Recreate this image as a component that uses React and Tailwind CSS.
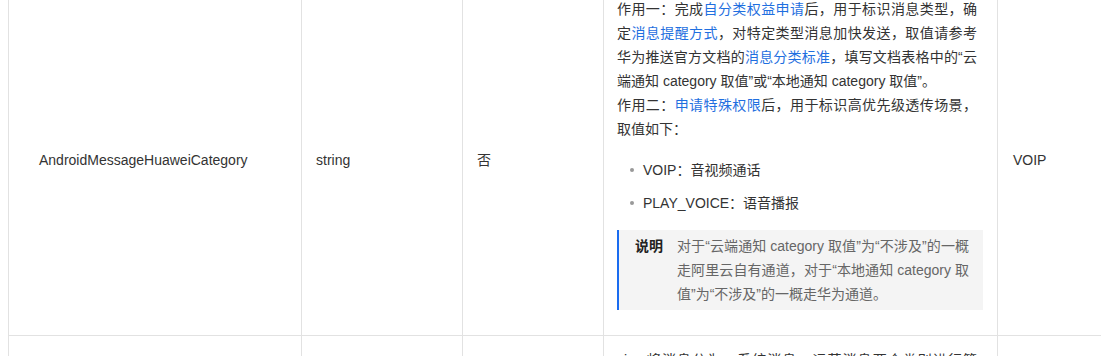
export default function App() {
  const link = "text-[#1f6fe0]";
  const cell = "border border-[#e2e2e2] align-middle";
  return (
    <div className="h-[356px] w-[1101px] overflow-hidden bg-white font-['Liberation_Sans','Noto_Sans_CJK_SC',sans-serif] text-[14px] leading-6 text-[#333]">
      <table className="-mt-[16px] ml-2 w-[1200px] table-fixed border-collapse">
        <colgroup>
          <col className="w-[293px]" />
          <col className="w-[161px]" />
          <col className="w-[141px]" />
          <col className="w-[394px]" />
          <col className="w-[211px]" />
        </colgroup>
        <tbody>
          <tr>
            <td className={`${cell} pl-[30px] pr-3`}>AndroidMessageHuaweiCategory</td>
            <td className={`${cell} px-[14px]`}>string</td>
            <td className={`${cell} px-[14px]`}>否</td>
            <td className={`${cell} pl-[13px] pr-[14px] pt-3 pb-3 align-top`}>
              <div className="pr-[6px] text-justify">
                <p>
                  作用一：完成<span className={link}>自分类权益申请</span>后，用于标识消息类型，确定
                  <span className={link}>消息提醒方式</span>，对特定类型消息加快发送，取值请参考华为推送官方文档的
                  <span className={link}>消息分类标准</span>，填写文档表格中的“云端通知 category 取值”或“本地通知 category 取值”。
                </p>
                <p>
                  作用二：<span className={link}>申请特殊权限</span>后，用于标识高优先级透传场景，取值如下：
                </p>
              </div>
              <ul className="mt-[17px] pl-[26px]">
                <li className="relative">
                  <span className="absolute -left-[13px] top-[10px] h-[4px] w-[4px] rounded-full bg-[#999]" />
                  VOIP：音视频通话
                </li>
                <li className="relative mt-[9px]">
                  <span className="absolute -left-[13px] top-[10px] h-[4px] w-[4px] rounded-full bg-[#999]" />
                  PLAY_VOICE：语音播报
                </li>
              </ul>
              <div className="mt-[15px] mb-[13px] flex border-l-2 border-[#1a6cf0] bg-[#f4f4f4] py-1 pl-4 pr-[14px]">
                <span className="w-[42px] shrink-0 font-bold text-[#222]">说明</span>
                <p className="flex-1 text-justify text-[#666]">
                  对于“云端通知 category 取值”为“不涉及”的一概走阿里云自有通道，对于“本地通知 category 取值”为“不涉及”的一概走华为通道。
                </p>
              </div>
            </td>
            <td className={`${cell} pl-[15px] pr-3`}>VOIP</td>
          </tr>
          <tr>
            <td className={`${cell} h-[120px]`}></td>
            <td className={cell}></td>
            <td className={cell}></td>
            <td className={`${cell} pl-[13px] pr-[14px] pt-3 align-top`}>
              <p className="pr-[6px] text-justify">
                vivo 将消息分为：系统消息、运营消息两个类别进行管理，
              </p>
            </td>
            <td className={cell}></td>
          </tr>
        </tbody>
      </table>
    </div>
  );
}
